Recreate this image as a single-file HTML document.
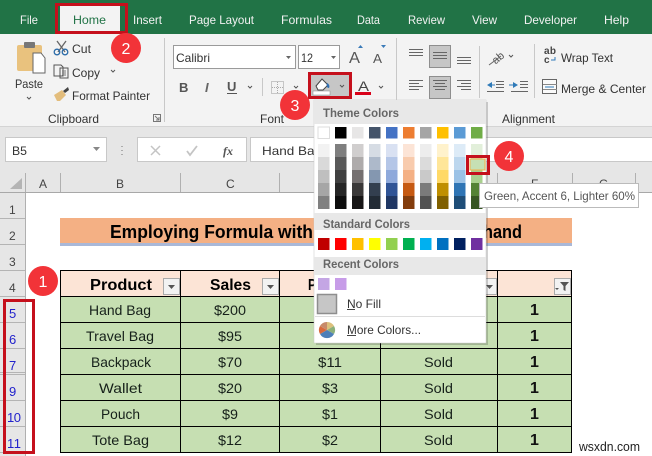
<!DOCTYPE html>
<html><head><meta charset="utf-8"><style>
html,body{margin:0;padding:0;background:#fff;width:652px;height:456px;overflow:hidden}
svg{display:block}
text{font-family:"Liberation Sans",sans-serif;fill:#333;font-size:12px}
.t{fill:#f2f2f2;font-size:12px}
.r{fill:#333;font-size:12px}
.g{fill:#666;font-size:12px;font-weight:bold}
.c{fill:#16201a;font-size:14px}
.n{fill:#2222cc;font-size:13px}
.h{fill:#444;font-size:12px}
.hd{fill:#000;font-size:16px;font-weight:bold}
.one{fill:#111;font-size:16px;font-weight:bold}
.w{fill:#fff;font-size:16px}
.ic{stroke:#555;stroke-width:1;fill:none}
</style></head><body>
<svg width="652" height="456" viewBox="0 0 652 456" xmlns="http://www.w3.org/2000/svg">
<rect width="652" height="456" fill="#fff"/>
<!-- title bar -->
<rect width="652" height="34" fill="#217346"/>
<rect x="60" y="4" width="60" height="30" fill="#f3f3f3"/>
<text class="t" x="20" y="24" textLength="18" lengthAdjust="spacingAndGlyphs">File</text>
<text class="t" x="73" y="24" textLength="33" lengthAdjust="spacingAndGlyphs" style="fill:#217346">Home</text>
<text class="t" x="133" y="24" textLength="29" lengthAdjust="spacingAndGlyphs">Insert</text>
<text class="t" x="189" y="24" textLength="65" lengthAdjust="spacingAndGlyphs">Page Layout</text>
<text class="t" x="281" y="24" textLength="51" lengthAdjust="spacingAndGlyphs">Formulas</text>
<text class="t" x="357" y="24" textLength="23" lengthAdjust="spacingAndGlyphs">Data</text>
<text class="t" x="408" y="24" textLength="37" lengthAdjust="spacingAndGlyphs">Review</text>
<text class="t" x="472" y="24" textLength="25" lengthAdjust="spacingAndGlyphs">View</text>
<text class="t" x="524" y="24" textLength="53" lengthAdjust="spacingAndGlyphs">Developer</text>
<text class="t" x="604" y="24" textLength="25" lengthAdjust="spacingAndGlyphs">Help</text>
<!-- ribbon -->
<rect y="34" width="652" height="92" fill="#f3f3f3"/>
<rect y="126" width="652" height="66" fill="#e6e6e6"/>
<line x1="0" y1="126.500" x2="652" y2="126.500" stroke="#d4d4d4"/>
<g stroke="#c8c8c8"><line x1="164.500" y1="38" x2="164.500" y2="122"/><line x1="396.500" y1="38" x2="396.500" y2="122"/><line x1="479.500" y1="46" x2="479.500" y2="98"/><line x1="534.500" y1="44" x2="534.500" y2="98"/><line x1="262.500" y1="78" x2="262.500" y2="96"/></g>
<!-- clipboard -->
<rect x="17" y="45" width="25" height="26" rx="2" fill="#e9c27e"/>
<rect x="24" y="42" width="11" height="6" rx="1" fill="#777"/>
<path d="M33 53h8l4 5v15H33z" fill="#fff" stroke="#666"/>
<text class="r" x="15" y="88" textLength="28" lengthAdjust="spacingAndGlyphs">Paste</text>
<path class="ic" d="M27 97l2 2 2-2"/>
<path d="M57 41l8 11M66 41l-8 11" stroke="#666" stroke-width="1.300" fill="none"/>
<circle cx="57" cy="52" r="2.800" fill="none" stroke="#2d6ca8" stroke-width="1.300"/><circle cx="65" cy="52" r="2.800" fill="none" stroke="#2d6ca8" stroke-width="1.300"/>
<text class="r" x="72" y="53" textLength="19" lengthAdjust="spacingAndGlyphs">Cut</text>
<path class="ic" d="M54 65h7l2 2v9H54zM60 68h8v10h-8z" fill="#f8f8f8"/>
<path d="M62 71h4M62 73h4M62 75h4" stroke="#777"/>
<text class="r" x="72" y="77" textLength="28" lengthAdjust="spacingAndGlyphs">Copy</text>
<path class="ic" d="M111 70l2 2 2-2"/>
<path d="M54 95l8-5 4 5-6 6h-3z" fill="#e3bd7c"/><path d="M63 91l5-4 1 3-4 3z" fill="#444"/>
<text class="r" x="72" y="100" textLength="78" lengthAdjust="spacingAndGlyphs">Format Painter</text>
<text class="r" x="48" y="123" textLength="51" lengthAdjust="spacingAndGlyphs">Clipboard</text>
<path d="M153.500 114.500h7v7h-7zM155 116l4 4M159 117v3h-3" fill="none" stroke="#777"/>
<!-- font -->
<rect x="173.500" y="45.500" width="122" height="23" fill="#fff" stroke="#9a9a9a"/>
<rect x="298.500" y="45.500" width="41" height="23" fill="#fff" stroke="#9a9a9a"/>
<text class="r" x="176" y="62" textLength="34" lengthAdjust="spacingAndGlyphs">Calibri</text>
<text class="r" x="301" y="62" textLength="12" lengthAdjust="spacingAndGlyphs">12</text>
<path d="M286 56h5l-2.500 3zM331 56h5l-2.500 3z" fill="#666"/>
<text x="349" y="63" style="font-size:16px;fill:#555" textLength="11" lengthAdjust="spacingAndGlyphs">A</text>
<path d="M358 48h5l-2.500-3z" fill="#3a7ab8"/>
<text x="373" y="63" style="font-size:13px;fill:#555" textLength="9" lengthAdjust="spacingAndGlyphs">A</text>
<path d="M381 45h5l-2.500 3z" fill="#3a7ab8"/>
<text x="179" y="92" style="font-size:13px;font-weight:bold;fill:#555">B</text>
<text x="205" y="92" style="font-size:13px;font-style:italic;font-weight:bold;fill:#666">I</text>
<text x="227" y="91" style="font-size:13px;font-weight:bold;fill:#555">U</text>
<line x1="227" y1="93.500" x2="237" y2="93.500" stroke="#555"/>
<path class="ic" d="M248 86l2 2 2-2M294 86l2 2 2-2"/>
<rect x="271.500" y="81.500" width="12" height="12" fill="none" stroke="#999" stroke-dasharray="1 1"/>
<path d="M277.500 82v12M272 87.500h12" stroke="#aaa" stroke-dasharray="1 1"/>
<rect x="310" y="75" width="40" height="22" fill="#c6c6c6"/>
<path d="M316 86l6-7 6 6-5 5h-5z" fill="#fff" stroke="#444"/><path d="M327 83c2 1 3 3 2 5-2 0-3-2-2-5z" fill="#2f6eb0"/>
<rect x="313" y="91" width="17" height="4" fill="#fff" stroke="#888" stroke-width=".5"/>
<path class="ic" d="M340 85l2 2 2-2"/>
<text x="358" y="91" style="font-size:14px;fill:#444" textLength="11" lengthAdjust="spacingAndGlyphs">A</text>
<rect x="355" y="92" width="16" height="3" fill="#d9021a"/>
<path class="ic" d="M379 86l2 2 2-2"/>
<text class="r" x="260" y="123" textLength="24" lengthAdjust="spacingAndGlyphs">Font</text>
<!-- alignment -->
<rect x="429.500" y="45.500" width="21" height="22" fill="#c6c6c6" stroke="#8e8e8e"/>
<rect x="429.500" y="76.500" width="21" height="22" fill="#c6c6c6" stroke="#8e8e8e"/>
<path d="M409 49.500h14M409 52.500h14M409 55.500h14M433 52.500h14M433 55.500h14M433 58.500h14M457 57.500h14M457 60.500h14M457 63.500h14M409 80.500h14M409 83.500h10M409 86.500h14M409 89.500h10M433 80.500h14M435 83.500h10M433 86.500h14M435 89.500h10M457 80.500h14M461 83.500h10M457 86.500h14M461 89.500h10" stroke="#666" fill="none"/>
<text x="490" y="63" transform="rotate(-40 495 56)" style="font-size:11px;fill:#555">ab</text>
<path d="M489 65l12-9" stroke="#666" fill="none"/>
<path class="ic" d="M509 55l2 2 2-2"/>
<path d="M487 85l5-3v6zM513 82l5 3-5 3z" fill="#2f7ab8"/><path d="M492 85h3M509 85h4" stroke="#2f7ab8"/>
<path d="M496 81.500h8M496 84.500h8M496 87.500h8M487 91.500h17M520 81.500h8M520 84.500h8M520 87.500h8M511 91.500h17" stroke="#666" fill="none"/>
<text x="544" y="54" style="font-size:10px;fill:#444;font-weight:bold" textLength="12">ab</text>
<text x="544" y="63" style="font-size:10px;fill:#444;font-weight:bold">c</text>
<path d="M555 57v3h-4" stroke="#2f7ab8" fill="none"/>
<text class="r" x="561" y="62" textLength="52" lengthAdjust="spacingAndGlyphs">Wrap Text</text>
<rect x="542.500" y="79.500" width="14" height="14" fill="#fafafa" stroke="#666"/>
<path d="M543 84.500h14M543 89.500h14" stroke="#888"/><path d="M545 87h9" stroke="#2f7ab8"/>
<text class="r" x="561" y="93" textLength="85" lengthAdjust="spacingAndGlyphs">Merge &amp; Center</text>
<text class="r" x="502" y="123" textLength="53" lengthAdjust="spacingAndGlyphs">Alignment</text>
<!-- formula bar -->
<rect x="5.500" y="137.500" width="101" height="24" fill="#fff" stroke="#c8c8c8"/>
<text class="r" x="12" y="155" textLength="15" lengthAdjust="spacingAndGlyphs" style="font-size:12px">B5</text>
<path d="M93 147h7l-3.500 4z" fill="#888"/>
<path d="M122 146v1M122 150v1M122 154v1" stroke="#999" stroke-width="1.500"/>
<rect x="137.500" y="137.500" width="109" height="24" fill="#fff" stroke="#c8c8c8"/>
<rect x="250.500" y="137.500" width="402" height="24" fill="#fff" stroke="#c8c8c8"/>
<path d="M151 146l9 9M160 146l-9 9" stroke="#c4c4c4" stroke-width="1.500"/>
<path d="M187 151l3 4 7-9" stroke="#c4c4c4" stroke-width="1.800" fill="none"/>
<text x="223" y="155" style="font-size:12px;font-style:italic;font-family:'Liberation Serif',serif;fill:#555;font-weight:bold">fx</text>
<text class="r" x="262" y="155" textLength="60" lengthAdjust="spacingAndGlyphs">Hand Bag</text>
<!-- headers -->
<rect y="173" width="652" height="19" fill="#e6e6e6"/>
<rect y="192" width="25" height="264" fill="#e6e6e6"/>
<path d="M22 178v11H10z" fill="#b4b4b4"/>
<path d="M25.500 173v283M60.500 173v19M180.500 173v19M279.500 173v19M380.500 173v19M497.500 173v19M572.500 173v19M635.500 173v19" stroke="#b0b0b0"/>
<line x1="0" y1="192.500" x2="652" y2="192.500" stroke="#a8a8a8"/>
<g class="h"><text class="h" x="39" y="188">A</text><text class="h" x="116" y="188">B</text><text class="h" x="226" y="188">C</text><text class="h" x="531" y="188">F</text><text class="h" x="599" y="188">G</text></g>
<path d="M0 218.500h25M0 244.500h25M0 270.500h25M0 296.500h25M0 322.500h25M0 348.500h25M0 372.500h25M0 374.500h25M0 400.500h25M0 426.500h25M0 452.500h25" stroke="#b4b4b4"/>
<text class="h" x="9" y="214">1</text><text class="h" x="9" y="240">2</text><text class="h" x="9" y="266">3</text><text class="h" x="9" y="292">4</text>
<text class="n" x="9" y="318">5</text><text class="n" x="9" y="344">6</text><text class="n" x="9" y="370">7</text><text class="n" x="9" y="396">9</text>
<text class="n" x="7" y="422" textLength="14">10</text><text class="n" x="7" y="448" textLength="14">11</text>
<!-- title cell -->
<rect x="60" y="218" width="512" height="25" fill="#f4b084"/>
<rect x="60" y="243" width="512" height="3" fill="#a9b8d8"/>
<text x="110" y="238" style="font-size:18px;font-weight:bold;fill:#000" textLength="203" lengthAdjust="spacingAndGlyphs">Employing Formula with</text>
<text x="483" y="238" style="font-size:18px;font-weight:bold;fill:#000" textLength="39" lengthAdjust="spacingAndGlyphs">hand</text>
<!-- table -->
<rect x="60" y="270" width="512" height="27" fill="#fce4d6"/>
<rect x="60" y="297" width="512" height="155" fill="#c6dfb2"/>
<path d="M60.500 270v183M180.500 270v183M279.500 270v183M380.500 270v183M497.500 270v183M571.500 270v183M60 270.500h512M60 296.500h512M60 322.500h512M60 348.500h512M60 374.500h512M60 400.500h512M60 426.500h512M60 452.500h512" stroke="#000" stroke-width="1" fill="none"/>
<text class="hd" x="90" y="290" textLength="62" lengthAdjust="spacingAndGlyphs">Product</text>
<text class="hd" x="210" y="290" textLength="41" lengthAdjust="spacingAndGlyphs">Sales</text>
<text class="hd" x="308" y="290" textLength="32" lengthAdjust="spacingAndGlyphs">Profit</text>
<g fill="#f2f2f2" stroke="#aaa"><rect x="163.500" y="278.500" width="16" height="16"/><rect x="262.500" y="278.500" width="16" height="16"/><rect x="481.500" y="278.500" width="15" height="16"/><rect x="554.500" y="278.500" width="16" height="16"/></g>
<path d="M168 285h7l-3.500 4zM267 285h7l-3.500 4zM486 285h7l-3.500 4z" fill="#555"/>
<path d="M560 282h9l-3.500 4v5l-2-1v-4zM555 288h4l-2 2z" fill="#555"/>
<g>
<text class="c" x="89" y="315" textLength="62" lengthAdjust="spacingAndGlyphs">Hand Bag</text>
<text class="c" x="86" y="341" textLength="68" lengthAdjust="spacingAndGlyphs">Travel Bag</text>
<text class="c" x="91" y="367" textLength="60" lengthAdjust="spacingAndGlyphs">Backpack</text>
<text class="c" x="99" y="393" textLength="43" lengthAdjust="spacingAndGlyphs">Wallet</text>
<text class="c" x="101" y="419" textLength="39" lengthAdjust="spacingAndGlyphs">Pouch</text>
<text class="c" x="92" y="445" textLength="57" lengthAdjust="spacingAndGlyphs">Tote Bag</text>
<text class="c" x="214" y="315" textLength="32" lengthAdjust="spacingAndGlyphs">$200</text>
<text class="c" x="218" y="341" textLength="24" lengthAdjust="spacingAndGlyphs">$95</text>
<text class="c" x="218" y="367" textLength="24" lengthAdjust="spacingAndGlyphs">$70</text>
<text class="c" x="218" y="393" textLength="24" lengthAdjust="spacingAndGlyphs">$20</text>
<text class="c" x="222" y="419" textLength="16" lengthAdjust="spacingAndGlyphs">$9</text>
<text class="c" x="218" y="445" textLength="24" lengthAdjust="spacingAndGlyphs">$12</text>
<text class="c" x="318" y="367" textLength="24" lengthAdjust="spacingAndGlyphs">$11</text>
<text class="c" x="322" y="393" textLength="16" lengthAdjust="spacingAndGlyphs">$3</text>
<text class="c" x="322" y="419" textLength="16" lengthAdjust="spacingAndGlyphs">$1</text>
<text class="c" x="322" y="445" textLength="16" lengthAdjust="spacingAndGlyphs">$2</text>
<text class="c" x="424" y="367" textLength="29" lengthAdjust="spacingAndGlyphs">Sold</text>
<text class="c" x="424" y="393" textLength="29" lengthAdjust="spacingAndGlyphs">Sold</text>
<text class="c" x="424" y="419" textLength="29" lengthAdjust="spacingAndGlyphs">Sold</text>
<text class="c" x="424" y="445" textLength="29" lengthAdjust="spacingAndGlyphs">Sold</text>
</g>
<text class="one" x="530" y="315">1</text><text class="one" x="530" y="341">1</text><text class="one" x="530" y="367">1</text><text class="one" x="530" y="393">1</text><text class="one" x="530" y="419">1</text><text class="one" x="530" y="445">1</text>
<text x="579" y="451" textLength="61" lengthAdjust="spacingAndGlyphs" style="font-size:13px;fill:#222">wsxdn.com</text>
<!-- popup -->
<rect x="316" y="102" width="172" height="243" fill="#000" opacity=".18"/>
<rect x="314" y="100" width="172" height="243" fill="#fff" stroke="#c8c8c8" stroke-width=".5"/>
<rect x="314" y="100" width="172" height="24" fill="#e8e8e8"/>
<rect x="314" y="213" width="172" height="17" fill="#e8e8e8"/>
<rect x="314" y="257" width="172" height="18" fill="#e8e8e8"/>
<text class="g" x="323" y="117" textLength="76" lengthAdjust="spacingAndGlyphs">Theme Colors</text>
<text class="g" x="323" y="228" textLength="87" lengthAdjust="spacingAndGlyphs">Standard Colors</text>
<text class="g" x="323" y="268" textLength="76" lengthAdjust="spacingAndGlyphs">Recent Colors</text>
<!-- theme top row -->
<g>
<rect x="318" y="127" width="11.500" height="11.500" fill="#fff" stroke="#ddd"/>
<rect x="335" y="127" width="11.500" height="11.500" fill="#000"/>
<rect x="352" y="127" width="11.500" height="11.500" fill="#e7e6e6"/>
<rect x="369" y="127" width="11.500" height="11.500" fill="#44546a"/>
<rect x="386" y="127" width="11.500" height="11.500" fill="#4472c4"/>
<rect x="403" y="127" width="11.500" height="11.500" fill="#ed7d31"/>
<rect x="420" y="127" width="11.500" height="11.500" fill="#a5a5a5"/>
<rect x="437" y="127" width="11.500" height="11.500" fill="#ffc000"/>
<rect x="454" y="127" width="11.500" height="11.500" fill="#5b9bd5"/>
<rect x="471" y="127" width="11.500" height="11.500" fill="#70ad47"/>
</g>
<!-- shades -->
<g>
<rect x="318" y="144" width="11.500" height="13" fill="#f2f2f2"/><rect x="318" y="157" width="11.500" height="13" fill="#d9d9d9"/><rect x="318" y="170" width="11.500" height="13" fill="#bfbfbf"/><rect x="318" y="183" width="11.500" height="13" fill="#a6a6a6"/><rect x="318" y="196" width="11.500" height="13" fill="#808080"/>
<rect x="335" y="144" width="11.500" height="13" fill="#7f7f7f"/><rect x="335" y="157" width="11.500" height="13" fill="#595959"/><rect x="335" y="170" width="11.500" height="13" fill="#404040"/><rect x="335" y="183" width="11.500" height="13" fill="#262626"/><rect x="335" y="196" width="11.500" height="13" fill="#0d0d0d"/>
<rect x="352" y="144" width="11.500" height="13" fill="#d0cece"/><rect x="352" y="157" width="11.500" height="13" fill="#aeabab"/><rect x="352" y="170" width="11.500" height="13" fill="#757070"/><rect x="352" y="183" width="11.500" height="13" fill="#3a3838"/><rect x="352" y="196" width="11.500" height="13" fill="#171616"/>
<rect x="369" y="144" width="11.500" height="13" fill="#d6dce4"/><rect x="369" y="157" width="11.500" height="13" fill="#adb9ca"/><rect x="369" y="170" width="11.500" height="13" fill="#8497b0"/><rect x="369" y="183" width="11.500" height="13" fill="#333f4f"/><rect x="369" y="196" width="11.500" height="13" fill="#222b35"/>
<rect x="386" y="144" width="11.500" height="13" fill="#d9e1f2"/><rect x="386" y="157" width="11.500" height="13" fill="#b4c6e7"/><rect x="386" y="170" width="11.500" height="13" fill="#8ea9db"/><rect x="386" y="183" width="11.500" height="13" fill="#305496"/><rect x="386" y="196" width="11.500" height="13" fill="#203764"/>
<rect x="403" y="144" width="11.500" height="13" fill="#fce4d6"/><rect x="403" y="157" width="11.500" height="13" fill="#f8cbad"/><rect x="403" y="170" width="11.500" height="13" fill="#f4b084"/><rect x="403" y="183" width="11.500" height="13" fill="#c65911"/><rect x="403" y="196" width="11.500" height="13" fill="#833c0c"/>
<rect x="420" y="144" width="11.500" height="13" fill="#ededed"/><rect x="420" y="157" width="11.500" height="13" fill="#dbdbdb"/><rect x="420" y="170" width="11.500" height="13" fill="#c9c9c9"/><rect x="420" y="183" width="11.500" height="13" fill="#7b7b7b"/><rect x="420" y="196" width="11.500" height="13" fill="#525252"/>
<rect x="437" y="144" width="11.500" height="13" fill="#fff2cc"/><rect x="437" y="157" width="11.500" height="13" fill="#ffe699"/><rect x="437" y="170" width="11.500" height="13" fill="#ffd966"/><rect x="437" y="183" width="11.500" height="13" fill="#bf8f00"/><rect x="437" y="196" width="11.500" height="13" fill="#806000"/>
<rect x="454" y="144" width="11.500" height="13" fill="#ddebf7"/><rect x="454" y="157" width="11.500" height="13" fill="#bdd7ee"/><rect x="454" y="170" width="11.500" height="13" fill="#9bc2e6"/><rect x="454" y="183" width="11.500" height="13" fill="#2f75b5"/><rect x="454" y="196" width="11.500" height="13" fill="#1f4e78"/>
<rect x="471" y="144" width="11.500" height="13" fill="#e2efda"/><rect x="471" y="157" width="11.500" height="13" fill="#c6e0b4"/><rect x="471" y="170" width="11.500" height="13" fill="#a9d08e"/><rect x="471" y="183" width="11.500" height="13" fill="#548235"/><rect x="471" y="196" width="11.500" height="13" fill="#375623"/>
</g>
<!-- standard -->
<g>
<rect x="318" y="238" width="11.500" height="12" fill="#c00000"/><rect x="335" y="238" width="11.500" height="12" fill="#ff0000"/><rect x="352" y="238" width="11.500" height="12" fill="#ffc000"/><rect x="369" y="238" width="11.500" height="12" fill="#ffff00"/><rect x="386" y="238" width="11.500" height="12" fill="#92d050"/><rect x="403" y="238" width="11.500" height="12" fill="#00b050"/><rect x="420" y="238" width="11.500" height="12" fill="#00b0f0"/><rect x="437" y="238" width="11.500" height="12" fill="#0070c0"/><rect x="454" y="238" width="11.500" height="12" fill="#002060"/><rect x="471" y="238" width="11.500" height="12" fill="#7030a0"/>
</g>
<rect x="318" y="278" width="11.500" height="12" fill="#c4a6e4"/><rect x="335" y="278" width="11.500" height="12" fill="#c79ce8"/>
<rect x="317.500" y="294.500" width="19" height="19" fill="#c6c6c6" stroke="#8e8e8e" stroke-width="1.500"/>
<text class="r" x="347" y="308" textLength="34" lengthAdjust="spacingAndGlyphs">No Fill</text><line x1="347" y1="309.500" x2="355" y2="309.500" stroke="#444"/>
<line x1="315" y1="316.500" x2="485" y2="316.500" stroke="#ddd"/>
<path d="M327 330V322a8 8 0 0 1 7 4z" fill="#dcc07c"/><path d="M327 330l7-4a8 8 0 0 1 0 8z" fill="#8bb07a"/><path d="M327 330l7 4a8 8 0 0 1-14 0z" fill="#4d7fb8"/><path d="M327 330l-7 4a8 8 0 0 1 0-8z" fill="#d8693c"/><path d="M327 330l-7-4a8 8 0 0 1 7-4z" fill="#c78a6a"/>
<text class="r" x="347" y="334" textLength="74" lengthAdjust="spacingAndGlyphs">More Colors...</text><line x1="347" y1="335.500" x2="356" y2="335.500" stroke="#444"/>
<!-- tooltip -->
<rect x="479.500" y="183.500" width="159" height="24" fill="#fff" stroke="#bbb"/>
<text x="484" y="200" textLength="151" lengthAdjust="spacingAndGlyphs" style="font-size:12px;fill:#555">Green, Accent 6, Lighter 60%</text>
<!-- red highlights -->
<g fill="none" stroke="#c5101c" stroke-width="3">
<rect x="56.500" y="4.500" width="70" height="28"/>
<rect x="309.500" y="73.500" width="41" height="24"/>
<rect x="4.500" y="300.500" width="29" height="152"/>
<rect x="467.500" y="156.500" width="21" height="17"/>
</g>
<rect x="470" y="159" width="15" height="11" fill="#c6e0b4" stroke="#f2b14a"/>
<!-- badges -->
<g fill="#f23338"><circle cx="43" cy="281" r="15"/><circle cx="126" cy="48" r="15"/><circle cx="295" cy="105" r="15"/><circle cx="509" cy="156" r="15"/></g>
<text class="w" x="38.500" y="287">1</text><text class="w" x="121.500" y="54">2</text><text class="w" x="290.500" y="111">3</text><text class="w" x="504.500" y="162">4</text>
</svg>
</body></html>
